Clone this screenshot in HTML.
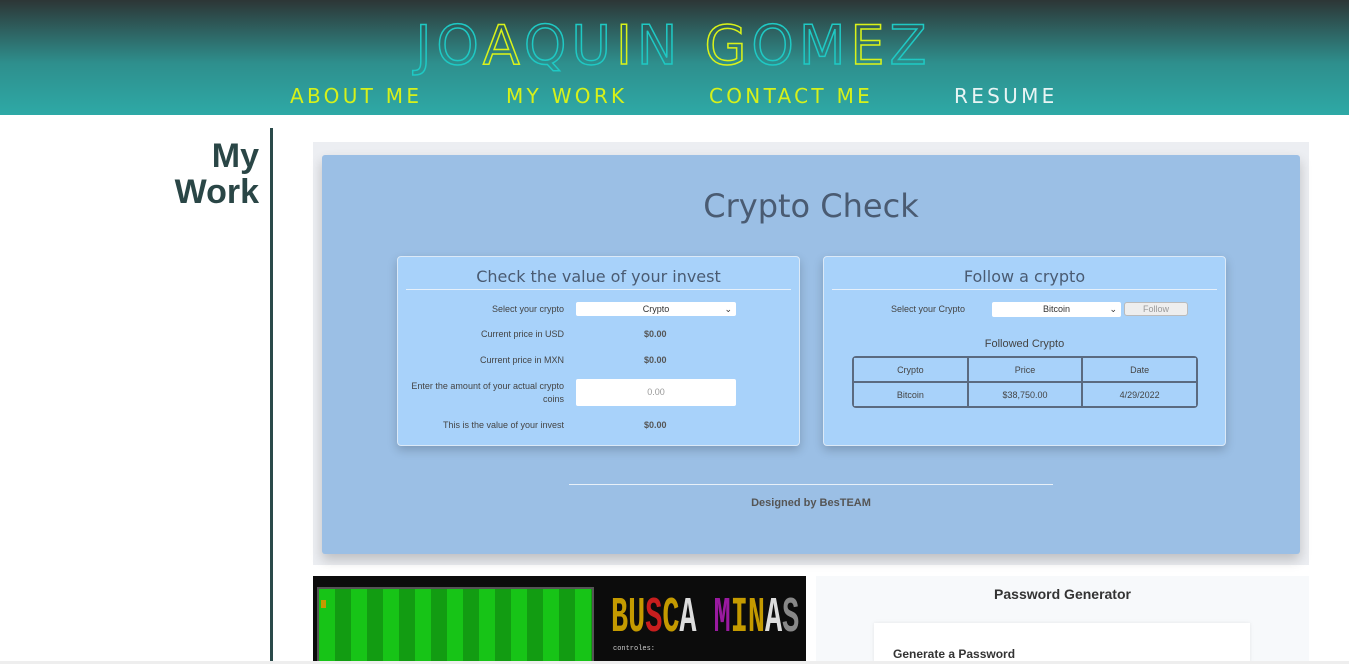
<!DOCTYPE html>
<html><head><style>
*{margin:0;padding:0;box-sizing:border-box}
html,body{width:1349px;height:664px;overflow:hidden}
body{background:#fff;font-family:"Liberation Sans",sans-serif;position:relative}
.hdr{position:absolute;left:0;top:0;width:1349px;height:115px;background:linear-gradient(#2d3636,#2e8f8d 55%,#2ea9a6)}
.title{position:absolute;left:405px;top:16px;width:537px;text-align:center;font-size:54px;letter-spacing:5px;color:transparent;-webkit-text-stroke:1.5px #1fc9c4;font-family:"DejaVu Sans",sans-serif;font-weight:normal;line-height:60px;white-space:nowrap}
.title span{-webkit-text-stroke:1.5px #d9f21a}
.nav{position:absolute;top:84px;font-size:20px;letter-spacing:3.3px;color:#d6f11a;font-family:"DejaVu Sans",sans-serif;white-space:nowrap}
.mw{position:absolute;right:1090px;top:138px;text-align:right;font-weight:bold;font-size:34px;line-height:36px;color:#2a4646}
.vl{position:absolute;left:270px;top:128px;width:3px;height:536px;background:#2a4a4a}
.outer{position:absolute;left:313px;top:142px;width:996px;height:423px;background:#eceef2}
.inner{position:absolute;left:322px;top:155px;width:978px;height:399px;background:#9bbfe5;box-shadow:0 6px 12px rgba(0,0,0,.2);border-radius:3px}
.h1{position:absolute;left:0;width:100%;top:32px;text-align:center;font-size:32px;color:#4a5b72;font-family:"DejaVu Sans",sans-serif}
.box{position:absolute;top:101px;width:403px;height:190px;background:#a8d2fa;border:1px solid #dbe9f7;border-radius:4px;box-shadow:0 4px 10px rgba(0,0,0,.2);color:#444;font-size:9px}
.bh{margin:10px 8px 0;text-align:center;font-size:16px;color:#4a5b72;padding-bottom:3px;border-bottom:1px solid #e6f0fa;font-family:"DejaVu Sans",sans-serif}
.r{position:absolute;font-size:9px;color:#444}
.b{font-weight:bold;color:#555}
.sel{position:absolute;background:#fff;border-radius:2px;font-size:9px;text-align:center;color:#333}
table{position:absolute;left:28px;top:99px;width:346px;table-layout:fixed;border-collapse:separate;border-spacing:0;border:1px solid #5a6a80;border-radius:4px;font-size:9px;color:#444}
td{border:1px solid #5a6a80;height:25px;text-align:center}
.img{position:absolute;left:313px;top:576px;width:493px;height:88px;background:#0c0c0c;overflow:hidden}
.pw{position:absolute;left:816px;top:576px;width:493px;height:88px;background:#f7f9fb}
</style></head><body>
<div class="hdr">
<div class="title">JO<span>A</span>QU<span>I</span>N <span>G</span>OM<span>E</span>Z</div>
<div class="nav" style="left:290px">ABOUT ME</div>
<div class="nav" style="left:506px">MY WORK</div>
<div class="nav" style="left:709px">CONTACT ME</div>
<div class="nav" style="left:954px;color:#e8f4f4">RESUME</div>
</div>
<div class="mw">My<br>Work</div>
<div class="vl"></div>
<div class="outer"></div>
<div class="inner">
<div class="h1">Crypto Check</div>
<div class="box" style="left:75px">
<div class="bh">Check the value of your invest</div>
<div class="r" style="right:235px;top:47px">Select your crypto</div>
<div class="sel" style="left:178px;top:45px;width:160px;height:14px;line-height:14px">Crypto <span style="position:absolute;right:4px">⌄</span></div>
<div class="r" style="right:235px;top:72px">Current price in USD</div><div class="r b" style="left:246px;top:72px">$0.00</div>
<div class="r" style="right:235px;top:98px">Current price in MXN</div><div class="r b" style="left:246px;top:98px">$0.00</div>
<div class="r" style="right:235px;top:123px;text-align:right;width:160px;line-height:13px">Enter the amount of your actual crypto coins</div>
<div class="sel" style="left:178px;top:122px;width:160px;height:27px;line-height:27px;color:#999">0.00</div>
<div class="r" style="right:235px;top:163px">This is the value of your invest</div><div class="r b" style="left:246px;top:163px">$0.00</div>
</div>
<div class="box" style="left:501px">
<div class="bh">Follow a crypto</div>
<div class="r" style="left:67px;top:47px">Select your Crypto</div>
<div class="sel" style="left:168px;top:45px;width:129px;height:15px;line-height:15px">Bitcoin <span style="position:absolute;right:4px">⌄</span></div>
<div class="sel" style="left:300px;top:45px;width:64px;height:14px;line-height:13px;background:#eee;border:1px solid #bbb;color:#999;border-radius:3px">Follow</div>
<div class="r" style="left:0;width:100%;text-align:center;top:81px;font-size:11px">Followed Crypto</div>
<table><tr><td>Crypto</td><td>Price</td><td>Date</td></tr><tr><td>Bitcoin</td><td>$38,750.00</td><td>4/29/2022</td></tr></table>
</div>
<div style="position:absolute;left:247px;top:329px;width:484px;height:1px;background:#e8f0f8"></div>
<div style="position:absolute;left:0;width:100%;top:342px;text-align:center;font-size:11px;font-weight:bold;color:#555">Designed by BesTEAM</div>
</div>
<div class="img">
<div style="position:absolute;left:4px;top:11px;width:277px;height:77px;border:2px solid #555;border-bottom:0;background:repeating-linear-gradient(90deg,#17c417 0 16px,#129c12 16px 32px)"></div>
<div style="position:absolute;left:8px;top:24px;width:5px;height:8px;background:#c49a00"></div>
<div style="position:absolute;left:298px;top:14px;white-space:nowrap;font-family:'Liberation Mono',monospace;font-size:50px;font-weight:bold;transform:scale(.57,1);transform-origin:left top;color:#c49a00">BU<span style="color:#c81e1e">S</span>C<span style="color:#ddd">A</span> <span style="color:#9a1aa0">M</span>IN<span style="color:#ddd">A</span><span style="color:#888">S</span></div>
<div style="position:absolute;left:300px;top:69px;font-size:7px;color:#ccc;font-family:'Liberation Mono',monospace">controles:</div>
</div>
<div class="pw">
<div style="position:absolute;left:0;width:100%;top:10px;text-align:center;font-size:14px;font-weight:bold;color:#333">Password Generator</div>
<div style="position:absolute;left:58px;top:47px;width:376px;height:41px;background:#fff;box-shadow:0 0 4px rgba(0,0,0,.08)"><div style="position:absolute;left:19px;top:24px;font-size:12px;font-weight:bold;color:#333">Generate a Password</div></div>
</div>
<div style="position:absolute;left:0;top:661px;width:1349px;height:3px;background:#eee"></div>
</body></html>
